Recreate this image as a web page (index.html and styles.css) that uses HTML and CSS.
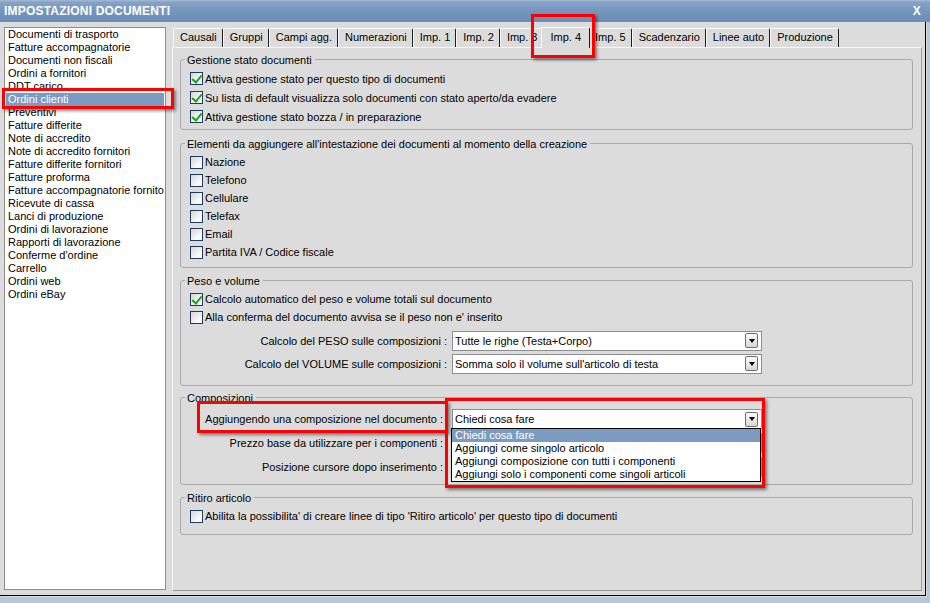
FILE: index.html
```html
<!DOCTYPE html>
<html lang="it">
<head>
    <meta charset="UTF-8">
    <meta name="viewport" content="width=device-width, initial-scale=1.0">
    <title>Impostazioni documenti</title>
    <link rel="stylesheet" href="styles.css">
</head>
<body>
    <div class="window">
        <!-- title bar -->
        <div class="titlebar">
            <span class="title">IMPOSTAZIONI DOCUMENTI</span>
            <span class="close">X</span>
        </div>

        <div class="body">
            <!-- document types -->
            <ul class="doc-list">
                <li>Documenti di trasporto</li>
                <li>Fatture accompagnatorie</li>
                <li>Documenti non fiscali</li>
                <li>Ordini a fornitori</li>
                <li>DDT carico</li>
                <li class="selected">Ordini clienti</li>
                <li>Preventivi</li>
                <li>Fatture differite</li>
                <li>Note di accredito</li>
                <li>Note di accredito fornitori</li>
                <li>Fatture differite fornitori</li>
                <li>Fatture proforma</li>
                <li>Fatture accompagnatorie fornito</li>
                <li>Ricevute di cassa</li>
                <li>Lanci di produzione</li>
                <li>Ordini di lavorazione</li>
                <li>Rapporti di lavorazione</li>
                <li>Conferme d'ordine</li>
                <li>Carrello</li>
                <li>Ordini web</li>
                <li>Ordini eBay</li>
            </ul>

            <!-- tabs -->
            <div class="tabs">
                <ul class="tab-strip">
                    <li class="tab">Causali</li>
                    <li class="tab">Gruppi</li>
                    <li class="tab">Campi agg.</li>
                    <li class="tab">Numerazioni</li>
                    <li class="tab">Imp. 1</li>
                    <li class="tab">Imp. 2</li>
                    <li class="tab">Imp. 3</li>
                    <li class="tab active">Imp. 4</li>
                    <li class="tab">Imp. 5</li>
                    <li class="tab">Scadenzario</li>
                    <li class="tab">Linee auto</li>
                    <li class="tab">Produzione</li>
                </ul>

                <div class="tab-panel">
                    <div class="group group-stato">
                        <span class="group-title">Gestione stato documenti</span>
                        <div class="check-row"><span class="check on"></span>Attiva gestione stato per questo tipo di documenti</div>
                        <div class="check-row"><span class="check on"></span>Su lista di default visualizza solo documenti con stato aperto/da evadere</div>
                        <div class="check-row"><span class="check on"></span>Attiva gestione stato bozza / in preparazione</div>
                    </div>

                    <div class="group group-intestazione">
                        <span class="group-title">Elementi da aggiungere all'intestazione dei documenti al momento della creazione</span>
                        <div class="check-row"><span class="check"></span>Nazione</div>
                        <div class="check-row"><span class="check"></span>Telefono</div>
                        <div class="check-row"><span class="check"></span>Cellulare</div>
                        <div class="check-row"><span class="check"></span>Telefax</div>
                        <div class="check-row"><span class="check"></span>Email</div>
                        <div class="check-row"><span class="check"></span>Partita IVA / Codice fiscale</div>
                    </div>

                    <div class="group group-peso">
                        <span class="group-title">Peso e volume</span>
                        <div class="check-row"><span class="check on"></span>Calcolo automatico del peso e volume totali sul documento</div>
                        <div class="check-row"><span class="check"></span>Alla conferma del documento avvisa se il peso non e' inserito</div>
                        <div class="field-row">
                            <span class="field-label">Calcolo del PESO sulle composizioni :</span>
                            <div class="combo"><span class="combo-text">Tutte le righe (Testa+Corpo)</span><span class="combo-btn"></span></div>
                        </div>
                        <div class="field-row">
                            <span class="field-label">Calcolo del VOLUME sulle composizioni :</span>
                            <div class="combo"><span class="combo-text">Somma solo il volume sull'articolo di testa</span><span class="combo-btn"></span></div>
                        </div>
                    </div>

                    <div class="group group-comp">
                        <span class="group-title">Composizioni</span>
                        <div class="field-row">
                            <span class="field-label">Aggiungendo una composizione nel documento :</span>
                            <div class="combo">
                                <span class="combo-text">Chiedi cosa fare</span><span class="combo-btn"></span>
                                <ul class="combo-list">
                                    <li class="selected">Chiedi cosa fare</li>
                                    <li>Aggiungi come singolo articolo</li>
                                    <li>Aggiungi composizione con tutti i componenti</li>
                                    <li>Aggiungi solo i componenti come singoli articoli</li>
                                </ul>
                            </div>
                        </div>
                        <div class="field-row">
                            <span class="field-label">Prezzo base da utilizzare per i componenti :</span>
                            <div class="combo"><span class="combo-text"></span><span class="combo-btn"></span></div>
                        </div>
                        <div class="field-row">
                            <span class="field-label">Posizione cursore dopo inserimento :</span>
                            <div class="combo"><span class="combo-text"></span><span class="combo-btn"></span></div>
                        </div>
                    </div>

                    <div class="group group-ritiro">
                        <span class="group-title">Ritiro articolo</span>
                        <div class="check-row"><span class="check"></span>Abilita la possibilita' di creare linee di tipo 'Ritiro articolo' per questo tipo di documenti</div>
                    </div>
                </div>
            </div>
        </div>

        <!-- red highlight marks -->
        <div class="mark mark-list"></div>
        <div class="mark mark-tab"></div>
        <div class="mark mark-label"></div>
        <div class="mark mark-combo"></div>
    </div>
</body>
</html>
```

FILE: styles.css
```css
/*global*/
* {
    margin: 0;
    padding: 0;
    box-sizing: border-box;
}

body {
    font-family: "Liberation Sans", Arial, sans-serif;
    font-size: 11px;
    color: #000;
    background: #b6c8dd;
}

ul {
    list-style: none;
}

/*window*/
.window {
    position: relative;
    width: 930px;
    height: 603px;
    background: #b6c8dd;
    overflow: hidden;
}

.titlebar {
    height: 22px;
    display: flex;
    align-items: center;
    justify-content: space-between;
    padding: 0 9px 0 4px;
    background: linear-gradient(#a7bcd6 0, #87a3c6 2px, #7293bb 60%, #6c8db5 100%);
    color: #fff;
    font-size: 12px;
    font-weight: bold;
    letter-spacing: 0.2px;
}

.body {
    display: flex;
    gap: 6px;
    width: 926px;
    height: 574px;
    padding: 5px 0 0 4px;
    background: #dcdcdc;
    border-right: 1px solid #000;
    border-bottom: 1px solid #000;
    box-shadow: 1px 1px 0 #dcdcdc;
}

/*document list*/
.doc-list {
    flex: none;
    width: 162px;
    height: 563px;
    padding: 0 1px;
    background: #fff;
    border: 1px solid #8c8c8c;
}

.doc-list li {
    height: 13px;
    line-height: 13px;
    padding-left: 2px;
    white-space: nowrap;
    overflow: hidden;
}

.doc-list .selected {
    background: #7b9bc1;
    color: #fff;
}

/*tabs*/
.tabs {
    width: 750px;
    display: flex;
    flex-direction: column;
}

.tab-strip {
    display: flex;
    align-items: flex-end;
    height: 20px;
    padding-left: 1px;
}

.tab {
    height: 19px;
    line-height: 17px;
    padding: 0 5px 0 6px;
    border: 1px solid;
    border-color: #f8f8f8 #1e1e1e transparent #f8f8f8;
    border-bottom: 0;
    border-radius: 2px 2px 0 0;
    white-space: nowrap;
}

.tab.active {
    position: relative;
    z-index: 1;
    height: 21px;
    line-height: 18px;
    margin: 0 -2px -1px;
    padding: 0 8px;
    background: #dcdcdc;
}

.tab-panel {
    height: 544px;
    padding: 0 8px 0 7px;
    border: 1px solid;
    border-color: #f8f8f8 #9c9c9c #9c9c9c #f8f8f8;
}

/*group boxes*/
.group {
    border: 1px solid #a9a9a9;
    border-radius: 3px;
    padding: 0 9px 6px;
}

.group-title {
    display: block;
    width: fit-content;
    margin: -6px 0 2px -5px;
    padding: 0 3px 0 2px;
    line-height: 13px;
    background: #dcdcdc;
}

.group-stato {
    margin-top: 11px;
    padding-bottom: 3px;
}

.group-intestazione {
    margin-top: 13px;
    padding-bottom: 6px;
}

.group-peso {
    margin-top: 12px;
    padding-bottom: 10px;
}

.group-comp {
    margin-top: 11px;
    padding-bottom: 5px;
}

.group-ritiro {
    margin-top: 12px;
    padding-bottom: 9px;
}

.group-ritiro .check-row {
    margin-top: 2px;
}

/*checkbox rows*/
.check-row {
    display: flex;
    align-items: center;
    height: 18px;
    white-space: nowrap;
}

.group-stato .check-row {
    height: 19px;
}

.check {
    position: relative;
    flex: none;
    width: 13px;
    height: 13px;
    margin-right: 2px;
    border: 1px solid #1d3b63;
    background: linear-gradient(135deg, #d4d4d4, #fafafa 70%);
}

.check.on::after {
    content: "";
    position: absolute;
    left: 3px;
    top: 0;
    width: 4px;
    height: 8px;
    border: solid #22a022;
    border-width: 0 2px 2px 0;
    transform: rotate(40deg);
}

/*combo rows*/
.field-row {
    display: flex;
    align-items: center;
    height: 23px;
}

.check-row + .field-row {
    margin-top: 3px;
}

.group-comp .field-row {
    height: 24px;
}

.field-label {
    flex: none;
    width: 257px;
    text-align: right;
    white-space: nowrap;
}

.group-comp .field-label {
    width: 253px;
}

.combo {
    position: relative;
    display: flex;
    align-items: center;
    width: 310px;
    height: 20px;
    margin-left: 5px;
    padding: 0 3px 0 2px;
    background: #fff;
    border: 1px solid #8d8d8d;
}

.group-comp .combo {
    margin-left: 9px;
}

.combo-text {
    flex: 1;
    white-space: nowrap;
}

.combo-btn {
    display: flex;
    align-items: center;
    justify-content: center;
    width: 13px;
    height: 15px;
    border: 1px solid #6e6e6e;
    border-radius: 2px;
    background: linear-gradient(#fdfdfd, #d6d6d6);
}

.combo-btn::after {
    content: "";
    border-top: 4px solid #000;
    border-left: 3px solid transparent;
    border-right: 3px solid transparent;
}

/*open drop-down*/
.combo-list {
    position: absolute;
    top: 18px;
    left: -2px;
    z-index: 2;
    width: 310px;
    background: #fff;
    border: 1px solid #000;
}

.combo-list li {
    height: 13px;
    line-height: 13px;
    padding-left: 3px;
    white-space: nowrap;
}

.combo-list .selected {
    background: #7b9bc1;
    color: #fff;
}

/*red marks*/
.mark {
    position: absolute;
    z-index: 5;
    border: 3px solid #f00;
    box-shadow: 2px 2px 3px rgba(0, 0, 0, 0.45);
}

.mark-list {
    left: 2px;
    top: 88px;
    width: 172px;
    height: 21px;
}

.mark-tab {
    left: 531px;
    top: 14px;
    width: 64px;
    height: 44px;
}

.mark-label {
    left: 197px;
    top: 401px;
    width: 251px;
    height: 32px;
}

.mark-combo {
    left: 445px;
    top: 398px;
    width: 320px;
    height: 90px;
}
```
